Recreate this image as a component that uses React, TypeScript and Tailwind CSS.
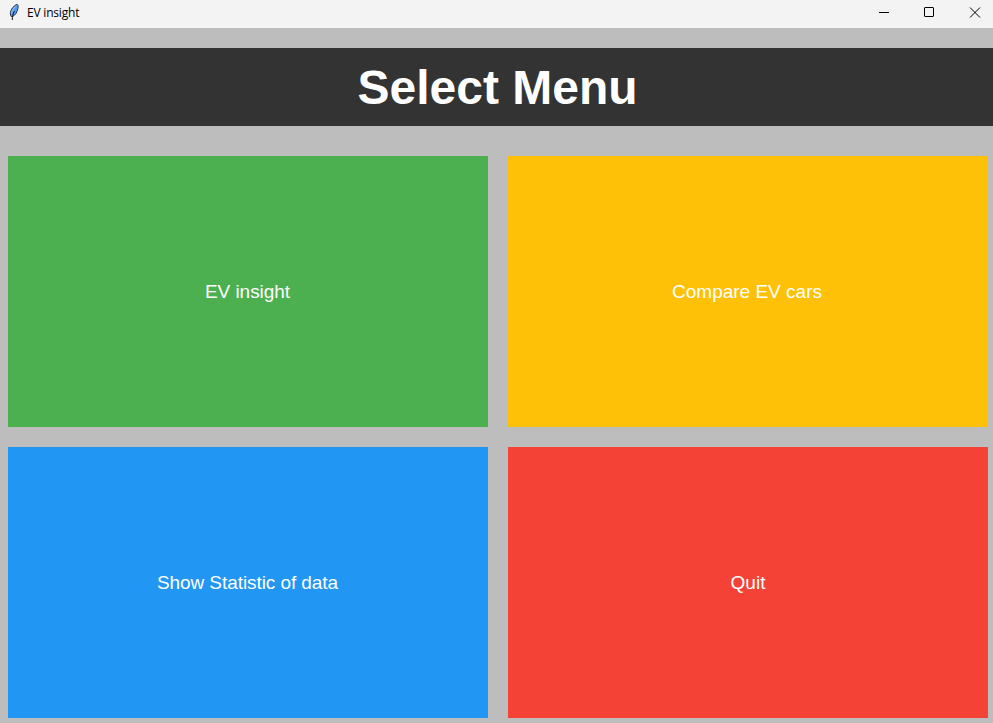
const tiles = [
  { label: 'EV insight', style: 'bg-[#4caf50] tracking-[-0.03px] pr-px' },
  { label: 'Compare EV cars', style: 'bg-[#ffc107] pr-[2px]' },
  { label: 'Show Statistic of data', style: 'bg-[#2196f3] tracking-[-0.07px] pr-px' },
  { label: 'Quit', style: 'bg-[#f44336]' },
];

export default function App() {
  return (
    <div className="flex h-[723px] w-[993px] flex-col overflow-hidden bg-[#bdbdbd] font-['Liberation_Sans',Arial,sans-serif]">
      <header className="flex h-7 shrink-0 items-start justify-between bg-[#f3f3f3]">
        <div className="flex h-[26px] items-center pl-2">
          <svg width="12" height="18" viewBox="0 0 12 18" className="mr-[7px] mb-[2px]">
            <path d="M3.2 13.5 C1.2 10.5 2.6 5 8.3 1.5 C10.5 1 10.4 3.5 9.8 6 C9 9.5 7.5 12 4.5 13.6 Z" fill="#5a9cf0" stroke="#111820" strokeWidth=".8" />
            <path d="M3.4 10.5 C4 7.4 5.5 5 7.6 3.4" fill="none" stroke="#a9cffa" strokeWidth=".8" />
            <path d="M4.3 17 C4.2 13.5 5 10.5 6.5 8" fill="none" stroke="#111820" strokeWidth="1" />
          </svg>
          <span className="font-['Open_Sans','Noto_Sans',sans-serif] text-[12px] leading-4 tracking-[-0.2px] text-black">EV insight</span>
        </div>
        <svg width="114" height="26" viewBox="0 0 114 26" fill="none" stroke="#000" strokeWidth="1" className="shrink-0">
          <path d="M0 12.5H10" />
          <rect x="45.5" y="7.5" width="9" height="9" rx=".5" />
          <path d="M91 7.5L101 17.5M101 7.5L91 17.5" />
        </svg>
      </header>
      <h1 className="mt-5 flex h-[78px] shrink-0 items-center justify-center bg-[#333333] pt-[2px] pl-[2px] text-[48px] leading-none font-bold text-white">Select Menu</h1>
      <main className="mt-[30px] grid grid-cols-[480px_480px] grid-rows-[271px_271px] gap-5 pl-2">
        {tiles.map((tile) => (
          <button key={tile.label} className={`${tile.style} pt-[2px] text-[19px] text-white`}>
            {tile.label}
          </button>
        ))}
      </main>
    </div>
  );
}
